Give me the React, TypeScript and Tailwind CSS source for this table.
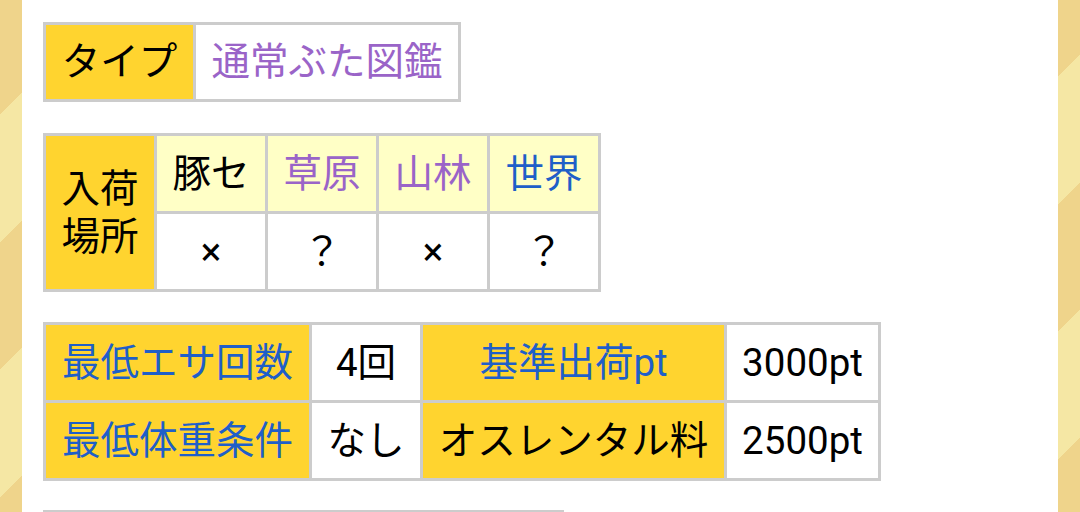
import React from 'react';

const yellow = 'bg-[#ffd42f]';
const pale = 'bg-[#ffffc6]';
const purple = 'text-[#9a64c8]';
const blue = 'text-[#1f5fc8]';

function Cell({
  children,
  className = '',
  h = 'h-[75px]'
}: {
  children: React.ReactNode;
  className?: string;
  h?: string;
}) {
  return (
    <div className={`flex items-center justify-center whitespace-nowrap ${h} ${className}`}>
      {children}
    </div>
  );
}

export default function App() {
  return (
    <div className="h-[512px] overflow-hidden bg-[image:repeating-linear-gradient(135deg,#efd48b_0px,#efd48b_81.3px,#f5e7a4_81.3px,#f5e7a4_171.8px,#efd48b_171.8px,#efd48b_180.3px)]">
      <div className="mx-[22px] h-full bg-white pl-[21px] pt-[22px] font-[Roboto,'Noto_Sans_CJK_JP',sans-serif] text-[38.5px] leading-[46px] text-black">
        {/* type */}
        <div className="inline-grid grid-cols-[147px_262px] gap-[3px] p-[3px] bg-[#cccccc] align-top">
          <Cell h="h-[74px]" className={yellow}>タイプ</Cell>
          <Cell h="h-[74px]" className={`bg-white ${purple}`}>通常ぶた図鑑</Cell>
        </div>

        {/* arrival */}
        <div className="mt-[31px]">
          <div className="inline-grid grid-cols-[108px_108px_108px_108px_108px] gap-[3px] p-[3px] bg-[#cccccc]">
            <div className={`row-span-2 flex items-center justify-center text-center leading-[48px] ${yellow}`}>
              入荷<br />場所
            </div>
            <Cell className={pale}>豚セ</Cell>
            <Cell className={`${pale} ${purple}`}>草原</Cell>
            <Cell className={`${pale} ${purple}`}>山林</Cell>
            <Cell className={`${pale} ${blue}`}>世界</Cell>
            <Cell className="bg-white">×</Cell>
            <Cell className="bg-white">？</Cell>
            <Cell className="bg-white">×</Cell>
            <Cell className="bg-white">？</Cell>
          </div>
        </div>

        {/* conditions */}
        <div className="mt-[30px]">
          <div className="inline-grid grid-cols-[263px_108px_301px_151px] gap-[3px] p-[3px] bg-[#cccccc]">
            <Cell className={`${yellow} ${blue}`}>最低エサ回数</Cell>
            <Cell className="bg-white">4回</Cell>
            <Cell className={`${yellow} ${blue}`}>基準出荷pt</Cell>
            <Cell className="bg-white">3000pt</Cell>
            <Cell className={`${yellow} ${blue}`}>最低体重条件</Cell>
            <Cell className="bg-white">なし</Cell>
            <Cell className={yellow}>オスレンタル料</Cell>
            <Cell className="bg-white">2500pt</Cell>
          </div>
        </div>

        <div className="mt-[29px] w-[521px] border-t-[3px] border-[#cccccc] bg-white h-10" />
      </div>
    </div>
  );
}
